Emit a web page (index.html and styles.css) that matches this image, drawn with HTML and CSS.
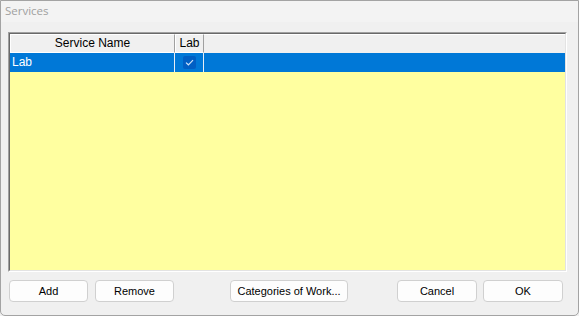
FILE: index.html
```html
<!DOCTYPE html>
<html>
<head>
<meta charset="utf-8">
<link rel="stylesheet" href="styles.css">
</head>
<body>
<div class="window">
  <div class="titlebar">Services</div>
  <div class="content">
    <div class="grid-outer">
      <div class="grid">
        <div class="header">
          <div class="hcell col-name">Service Name</div>
          <div class="hcell col-lab">Lab</div>
          <div class="hfill"></div>
        </div>
        <div class="row selected">
          <div class="cell col-name">Lab</div>
          <div class="cell col-lab"><span class="check"><svg width="9" height="7" viewBox="0 0 9 7"><path d="M1 3.6 L3.4 5.8 L8 1.2" fill="none" stroke="#cfe3f7" stroke-width="1.2"/></svg></span></div>
          <div class="fill"></div>
        </div>
      </div>
    </div>
    <div class="buttons">
      <button class="btn btn-std">Add</button>
      <button class="btn btn-std btn-remove">Remove</button>
      <button class="btn btn-cat">Categories of Work...</button>
      <div class="spacer"></div>
      <button class="btn btn-std btn-cancel">Cancel</button>
      <button class="btn btn-std btn-ok">OK</button>
    </div>
  </div>
</div>
</body>
</html>
```
FILE: styles.css
```css
html, body {
  margin: 0;
  padding: 0;
  background: #f0f0f0;
}
.window {
  width: 579px;
  height: 316px;
  box-sizing: border-box;
  border: 1px solid #a3a3a3;
  border-radius: 0 0 5px 5px;
  background: #f0f0f0;
  display: flex;
  flex-direction: column;
  overflow: hidden;
}
.titlebar {
  height: 21px;
  background: #f3f3f3;
  color: #a0a0a0;
  font-family: "Open Sans", "Noto Sans", sans-serif;
  font-size: 11.5px;
  line-height: 20px;
  padding-left: 4px;
}
.content {
  flex: 1;
  display: flex;
  flex-direction: column;
  padding: 10px 11px 0 7px;
}
.grid-outer {
  height: 240px;
  box-sizing: border-box;
  border-style: solid;
  border-width: 1px;
  border-color: #a0a0a0 #ffffff #ffffff #a0a0a0;
}
.grid {
  height: 100%;
  box-sizing: border-box;
  border-style: solid;
  border-width: 1px;
  border-color: #696969 #e3e3e3 #e3e3e3 #696969;
  background: #ffffa0;
  font-family: "Liberation Sans", Arial, sans-serif;
  font-size: 12px;
}
.header {
  display: flex;
  height: 19px;
  background: #f0f0f0;
}
.hcell {
  box-sizing: border-box;
  height: 19px;
  border-style: solid;
  border-width: 1px;
  border-color: #ffffff #a0a0a0 #ffffff #ffffff;
  text-align: center;
  line-height: 17px;
  color: #000;
}
.hfill {
  flex: 1;
  border-top: 1px solid #ffffff;
}
.col-name { width: 165px; }
.col-lab { width: 29px; }
.row {
  display: flex;
  height: 19px;
}
.row.selected {
  background: #0078d7;
  color: #ffffff;
}
.cell {
  box-sizing: border-box;
  height: 19px;
  border-right: 1px solid #e8eef5;
  line-height: 18px;
}
.cell.col-name {
  padding-left: 2px;
}
.cell.col-lab {
  display: flex;
  align-items: center;
  justify-content: center;
}
.check {
  width: 13px;
  height: 13px;
  border-radius: 2px;
  background: #005fc4;
  display: flex;
  align-items: center;
  justify-content: center;
}
.fill { flex: 1; }
.buttons {
  display: flex;
  margin-top: 8px;
  padding-left: 1px;
  padding-right: 4px;
  align-items: flex-start;
}
.btn {
  height: 22px;
  box-sizing: border-box;
  background: #fdfdfd;
  border: 1px solid #d0d0d0;
  border-radius: 4px;
  font-family: "Liberation Sans", Arial, sans-serif;
  font-size: 11px;
  color: #000;
  padding: 0;
}
.btn-std { width: 79px; }
.btn-remove { margin-left: 7px; }
.btn-cat { width: 118px; margin-left: 56px; }
.spacer { flex: 1; }
.btn-cancel { width: 80px; }
.btn-ok { width: 80px; margin-left: 6px; }
```
